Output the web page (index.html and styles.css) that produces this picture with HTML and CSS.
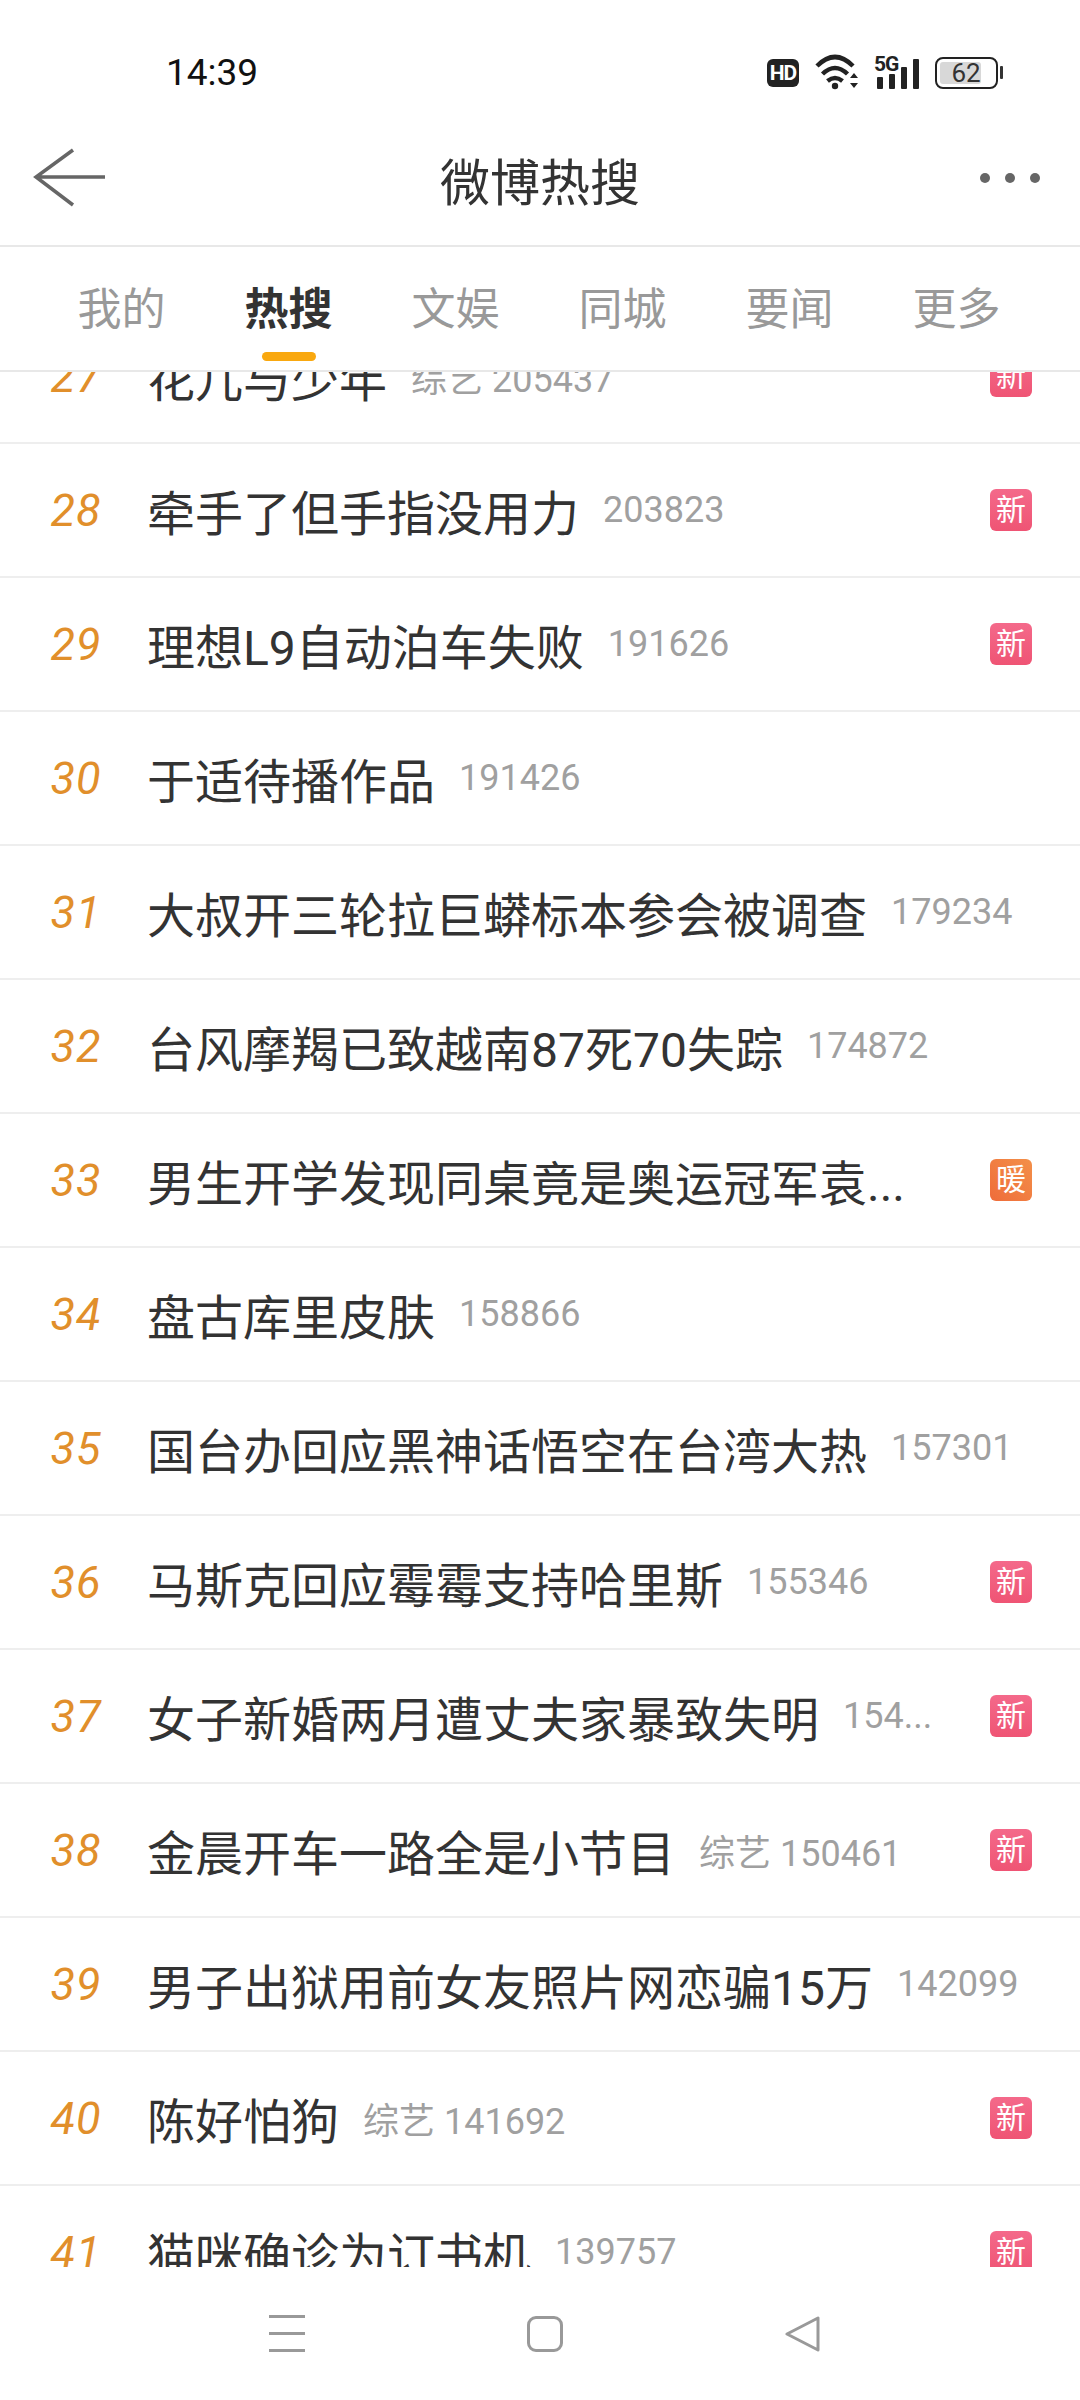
FILE: index.html
```html
<!DOCTYPE html>
<html lang="zh-CN">
<head>
    <meta charset="UTF-8">
    <meta name="viewport" content="width=device-width, initial-scale=1.0">
    <title>微博热搜</title>
    <link rel="stylesheet" href="styles.css">
</head>
<body>
<div class="page">

    <!-- Status bar -->
    <div class="status">
        <div class="time">14:39</div>
        <div class="status-icons">
            <span class="hd">HD</span>
            <svg class="wifi" width="47" height="36" viewBox="-2 -1 47 36">
                <path d="M2 10Q20 -8 38 10M7.5 18Q20 6 32.5 18M12.5 25Q20 19 27.5 25" fill="none" stroke="#222" stroke-width="4.5"/>
                <circle cx="20" cy="30" r="3.2" fill="#222"/>
                <path d="M35 22L39 17L43 22ZM35 27H43L39 32Z" fill="#222"/>
            </svg>
            <svg class="signal" width="47" height="36" viewBox="0 0 47 36">
                <text x="0" y="16" class="five-g">5G</text>
                <rect x="3" y="22" width="6" height="12" rx="1" fill="#222"/>
                <rect x="15" y="19" width="6" height="15" rx="1" fill="#222"/>
                <rect x="27" y="12" width="6" height="22" rx="1" fill="#222"/>
                <rect x="39" y="4" width="6" height="30" rx="1" fill="#222"/>
            </svg>
            <svg class="battery" width="69" height="32" viewBox="0 0 69 32">
                <rect x="1" y="1" width="61" height="30" rx="7" fill="none" stroke="#222" stroke-width="2"/>
                <rect x="5" y="5" width="41" height="22" rx="3" fill="#d8d8d8"/>
                <rect x="65" y="9" width="3" height="13" rx="1" fill="#333"/>
                <text x="31" y="25" class="batt-num">62</text>
            </svg>
        </div>
    </div>

    <!-- Title bar -->
    <div class="topbar">
        <svg class="back" width="74" height="60" viewBox="0 0 74 60">
            <path d="M40 2L3 29L40 57M3 29H72" fill="none" stroke="#666" stroke-width="3.5"/>
        </svg>
        <div class="page-title">微博热搜</div>
        <div class="more"><i></i><i></i><i></i></div>
    </div>

    <!-- Tabs -->
    <div class="tabs">
        <div class="tab">我的</div>
        <div class="tab active">热搜<span class="tab-bar"></span></div>
        <div class="tab">文娱</div>
        <div class="tab">同城</div>
        <div class="tab">要闻</div>
        <div class="tab">更多</div>
    </div>

    <!-- Hot list, scrolled part way -->
    <div class="list">
        <div class="list-inner">
            <div class="row"><span class="rank">27</span><span class="name">花儿与少年</span><span class="meta">综艺 205437</span><span class="badge">新</span></div>
            <div class="row"><span class="rank">28</span><span class="name">牵手了但手指没用力</span><span class="meta">203823</span><span class="badge">新</span></div>
            <div class="row"><span class="rank">29</span><span class="name">理想L9自动泊车失败</span><span class="meta">191626</span><span class="badge">新</span></div>
            <div class="row"><span class="rank">30</span><span class="name">于适待播作品</span><span class="meta">191426</span></div>
            <div class="row"><span class="rank">31</span><span class="name">大叔开三轮拉巨蟒标本参会被调查</span><span class="meta">179234</span></div>
            <div class="row"><span class="rank">32</span><span class="name">台风摩羯已致越南87死70失踪</span><span class="meta">174872</span></div>
            <div class="row"><span class="rank">33</span><span class="name">男生开学发现同桌竟是奥运冠军袁...</span><span class="badge warm">暖</span></div>
            <div class="row"><span class="rank">34</span><span class="name">盘古库里皮肤</span><span class="meta">158866</span></div>
            <div class="row"><span class="rank">35</span><span class="name">国台办回应黑神话悟空在台湾大热</span><span class="meta">157301</span></div>
            <div class="row"><span class="rank">36</span><span class="name">马斯克回应霉霉支持哈里斯</span><span class="meta">155346</span><span class="badge">新</span></div>
            <div class="row"><span class="rank">37</span><span class="name">女子新婚两月遭丈夫家暴致失明</span><span class="meta">154...</span><span class="badge">新</span></div>
            <div class="row"><span class="rank">38</span><span class="name">金晨开车一路全是小节目</span><span class="meta">综艺 150461</span><span class="badge">新</span></div>
            <div class="row"><span class="rank">39</span><span class="name">男子出狱用前女友照片网恋骗15万</span><span class="meta">142099</span></div>
            <div class="row"><span class="rank">40</span><span class="name">陈好怕狗</span><span class="meta">综艺 141692</span><span class="badge">新</span></div>
            <div class="row"><span class="rank">41</span><span class="name">猫咪确诊为订书机</span><span class="meta">139757</span><span class="badge">新</span></div>
        </div>
    </div>

    <!-- Navigation bar -->
    <div class="navbar">
        <div class="nav-menu"><i></i><i></i><i></i></div>
        <div class="nav-home"></div>
        <svg class="nav-back" width="36" height="36" viewBox="0 0 36 36">
            <path d="M33 2V34L2 18Z" fill="none" stroke="#999" stroke-width="3" stroke-linejoin="round"/>
        </svg>
    </div>

</div>
</body>
</html>
```

FILE: styles.css
```css
/* Global Reset */
* {
    margin: 0;
    padding: 0;
    box-sizing: border-box;
}

body {
    font-family: 'Roboto', 'Noto Sans CJK SC', sans-serif;
    background: #fff;
}

.page {
    width: 1080px;
    height: 2400px;
    display: flex;
    flex-direction: column;
    overflow: hidden;
}

/* Status Bar */
.status {
    height: 100px;
    padding: 46px 76px 0 166px;
    display: flex;
    align-items: center;
    justify-content: space-between;
}

.time {
    font-size: 37px;
    line-height: 40px;
    color: #111;
}

.status-icons {
    display: flex;
    align-items: center;
    gap: 14px;
}

.status-icons svg {
    overflow: visible;
}

.hd {
    width: 32px;
    height: 28px;
    background: #222;
    border-radius: 6px;
    color: #fff;
    font-size: 21px;
    font-weight: 700;
    line-height: 28px;
    letter-spacing: -1px;
    text-align: center;
}

.five-g {
    font-size: 21px;
    font-weight: 700;
    letter-spacing: -1px;
    fill: #222;
}

.batt-num {
    font-size: 26px;
    fill: #333;
    text-anchor: middle;
}

/* Title Bar */
.topbar {
    height: 147px;
    padding: 10px 40px 0;
    border-bottom: 2px solid #e8e8e8;
    display: grid;
    grid-template-columns: 1fr auto 1fr;
    align-items: center;
}

.back {
    margin-left: -7px;
}

.page-title {
    font-size: 50px;
    line-height: 60px;
    padding-top: 12px;
    color: #333;
}

.more {
    justify-self: end;
    display: flex;
    gap: 15px;
}

.more i {
    width: 10px;
    height: 10px;
    border-radius: 50%;
    background: #666;
}

/* Tabs */
.tabs {
    height: 125px;
    padding: 38px 0 0 38px;
    border-bottom: 2px solid #e8e8e8;
    display: grid;
    grid-template-columns: repeat(6, 167px);
}

.tab {
    display: flex;
    flex-direction: column;
    align-items: center;
    font-size: 44px;
    line-height: 50px;
    color: #999;
}

.tab.active {
    color: #333;
    font-weight: 700;
}

.tab-bar {
    width: 54px;
    height: 9px;
    margin-top: 17px;
    border-radius: 5px;
    background: #f9a80f;
}

/* Hot List */
.list {
    height: 1895px;
    overflow: hidden;
}

.list-inner {
    margin-top: -62px;
}

.row {
    height: 134px;
    padding: 0 48px 0 30px;
    border-bottom: 2px solid #eeeeee;
    display: flex;
    align-items: center;
}

.rank {
    width: 92px;
    margin-right: 25px;
    font-size: 45px;
    letter-spacing: 1px;
    font-style: italic;
    text-align: center;
    color: #e18f2b;
    flex-shrink: 0;
}

.name {
    font-size: 48px;
    color: #333;
    white-space: nowrap;
}

.meta {
    margin-left: 24px;
    font-size: 36px;
    color: #a0a0a0;
    white-space: nowrap;
}

.badge {
    width: 42px;
    height: 42px;
    margin-left: auto;
    border-radius: 6px;
    background: linear-gradient(#f4698a, #ef5474);
    color: #fff;
    font-size: 30px;
    line-height: 42px;
    text-align: center;
    flex-shrink: 0;
}

.badge.warm {
    background: linear-gradient(45deg, #ef6c3a, #f39049);
}

/* Navigation Bar */
.navbar {
    flex: 1;
    padding-left: 10px;
    display: flex;
    align-items: center;
    justify-content: center;
    gap: 222px;
}

.nav-menu {
    width: 36px;
    height: 37px;
    display: flex;
    flex-direction: column;
    justify-content: space-between;
}

.nav-menu i {
    height: 3px;
    background: #999;
}

.nav-home {
    width: 36px;
    height: 36px;
    border: 3px solid #999;
    border-radius: 9px;
}
```
